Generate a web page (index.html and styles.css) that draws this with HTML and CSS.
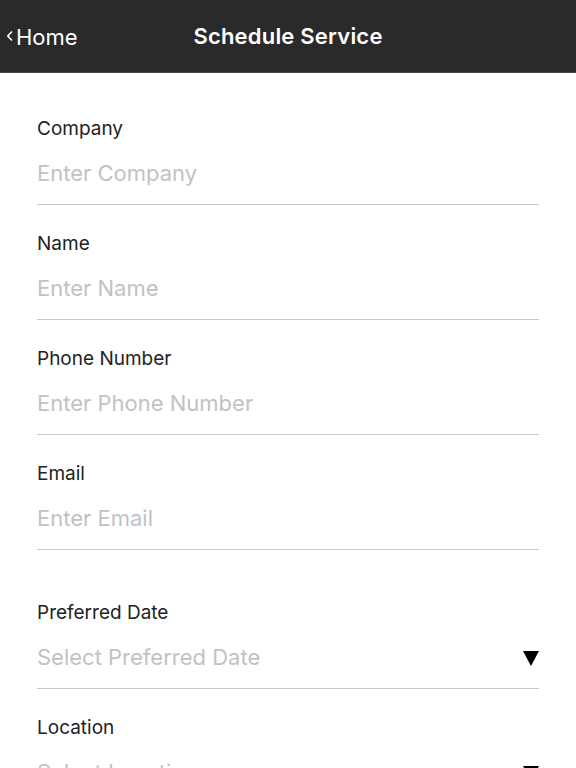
FILE: index.html
```html
<!DOCTYPE html>
<html>
<head>
<meta charset="utf-8">
<link rel="stylesheet" href="styles.css">
</head>
<body>
<header class="navbar">
  <a class="back">
    <svg class="chev" width="8" height="12" viewBox="0 0 8 12"><polyline points="6,1.5 1.8,6 6,10.5" fill="none" stroke="#fff" stroke-width="1.6"/></svg>
    <span>Home</span>
  </a>
  <h1 class="title">Schedule Service</h1>
</header>
<main class="form">
  <div class="field">
    <div class="label">Company</div>
    <div class="input"><span class="ph">Enter Company</span></div>
  </div>
  <div class="field">
    <div class="label">Name</div>
    <div class="input"><span class="ph">Enter Name</span></div>
  </div>
  <div class="field">
    <div class="label">Phone Number</div>
    <div class="input"><span class="ph">Enter Phone Number</span></div>
  </div>
  <div class="field">
    <div class="label">Email</div>
    <div class="input"><span class="ph">Enter Email</span></div>
  </div>
  <div class="field field-section">
    <div class="label">Preferred Date</div>
    <div class="input select"><span class="ph">Select Preferred Date</span>
      <svg class="arrow" width="16" height="16" viewBox="0 0 16 16"><polygon points="0,1 16,1 8,16" fill="#000"/></svg>
    </div>
  </div>
  <div class="field">
    <div class="label">Location</div>
    <div class="input select"><span class="ph">Select Location</span>
      <svg class="arrow" width="16" height="16" viewBox="0 0 16 16"><polygon points="0,1 16,1 8,16" fill="#000"/></svg>
    </div>
  </div>
</main>
</body>
</html>
```
FILE: styles.css
```css
html, body {
  margin: 0;
  padding: 0;
  background: #fff;
  font-family: Inter, "Liberation Sans", sans-serif;
  overflow: hidden;
  height: 768px;
}
.navbar {
  height: 73px;
  box-sizing: border-box;
  background: #2b2a2a;
  border-bottom: 1px solid #4a4a4a;
  display: flex;
  align-items: center;
  justify-content: center;
  position: relative;
}
.back {
  position: absolute;
  left: 6px;
  top: 24px;
  display: flex;
  align-items: center;
  gap: 2px;
  color: #fff;
  font-size: 22px;
  line-height: 26px;
}
.chev {
  margin-top: -2px;
}
.title {
  margin: 0;
  color: #fff;
  font-size: 22px;
  font-weight: 600;
  line-height: 26px;
  letter-spacing: 0.2px;
}
.form {
  padding: 44px 37px 0;
}
.field {
  margin-bottom: 27px;
}
.field-section {
  padding-top: 24px;
}
.label {
  font-size: 19px;
  line-height: 24px;
  color: #222;
  margin-bottom: 18px;
}
.input {
  height: 46px;
  box-sizing: border-box;
  border-bottom: 1px solid #c8c8c8;
  display: flex;
  align-items: flex-start;
  justify-content: space-between;
}
.ph {
  font-size: 22px;
  line-height: 28px;
  color: #c2c2c2;
}
.arrow {
  margin-top: 7px;
}
```
